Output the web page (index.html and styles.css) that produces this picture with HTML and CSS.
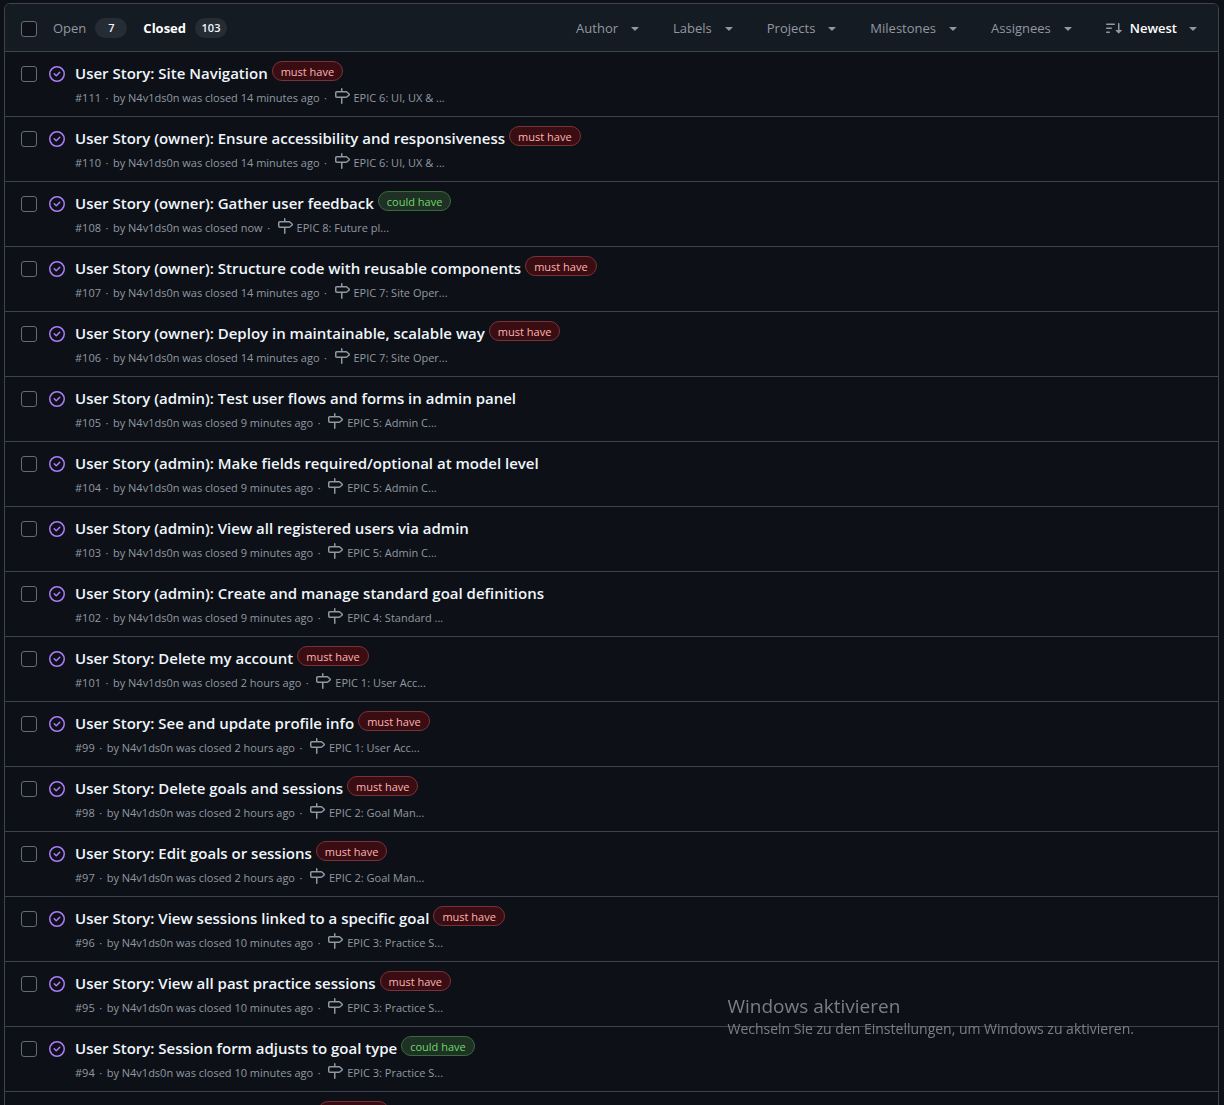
FILE: index.html
```
<!DOCTYPE html>
<html lang="en">
<head>
<meta charset="utf-8">
<title>Issues</title>
<link rel="stylesheet" href="styles.css">
</head>
<body>
<svg class="sprite" aria-hidden="true">
  <symbol id="closed" viewBox="0 0 16 16"><path d="M11.28 6.78a.75.75 0 0 0-1.06-1.06L7.25 8.69 5.78 7.22a.75.75 0 0 0-1.06 1.06l2 2a.75.75 0 0 0 1.06 0l3.5-3.5Z"/><path d="M16 8A8 8 0 1 1 0 8a8 8 0 0 1 16 0Zm-1.5 0a6.5 6.5 0 1 0-13 0 6.5 6.5 0 0 0 13 0Z"/></symbol>
  <symbol id="milestone" viewBox="0 0 16 16"><path d="M7.75 0a.75.75 0 0 1 .75.75V3h3.634c.414 0 .814.147 1.13.414l2.07 1.75a1.75 1.75 0 0 1 0 2.672l-2.07 1.75a1.75 1.75 0 0 1-1.13.414H8.5v5.25a.75.75 0 0 1-1.5 0V10H2.75A1.75 1.75 0 0 1 1 8.25v-3.5C1 3.784 1.784 3 2.75 3H7V.75A.75.75 0 0 1 7.75 0Zm4.384 8.5a.25.25 0 0 0 .161-.06l2.07-1.75a.248.248 0 0 0 0-.38l-2.07-1.75a.25.25 0 0 0-.161-.06H2.75a.25.25 0 0 0-.25.25v3.5c0 .138.112.25.25.25h9.384Z"/></symbol>
  <symbol id="sort" viewBox="0 0 16 16"><path d="M0 4.25a.75.75 0 0 1 .75-.75h7.5a.75.75 0 0 1 0 1.5H.75A.75.75 0 0 1 0 4.25Zm0 4a.75.75 0 0 1 .75-.75h4.5a.75.75 0 0 1 0 1.5H.75A.75.75 0 0 1 0 8.25Zm0 4a.75.75 0 0 1 .75-.75h2.5a.75.75 0 0 1 0 1.5H.75a.75.75 0 0 1-.75-.75ZM13.5 10h2.25a.25.25 0 0 1 .177.427l-3 3a.25.25 0 0 1-.354 0l-3-3A.25.25 0 0 1 9.75 10H12V3.75a.75.75 0 0 1 1.5 0V10Z"/></symbol>
  <symbol id="caret" viewBox="0 0 16 16"><path d="m4.427 7.427 3.396 3.396a.25.25 0 0 0 .354 0l3.396-3.396A.25.25 0 0 0 11.396 7H4.604a.25.25 0 0 0-.177.427Z"/></symbol>
</svg>

<main class="panel">
  <header class="toolbar">
    <input class="check" type="checkbox" aria-label="Select all issues">
    <nav class="states">
      <a class="state" href="#open">Open <span class="count">7</span></a>
      <a class="state current" href="#closed-issues">Closed <span class="count">103</span></a>
    </nav>
    <div class="filters">
      <button class="filter">Author <svg class="icon"><use href="#caret"/></svg></button>
      <button class="filter">Labels <svg class="icon"><use href="#caret"/></svg></button>
      <button class="filter">Projects <svg class="icon"><use href="#caret"/></svg></button>
      <button class="filter">Milestones <svg class="icon"><use href="#caret"/></svg></button>
      <button class="filter">Assignees <svg class="icon"><use href="#caret"/></svg></button>
      <button class="filter sort"><svg class="icon"><use href="#sort"/></svg><span>Newest</span><svg class="icon"><use href="#caret"/></svg></button>
    </div>
  </header>

  <ul class="issues">
    <li class="issue">
      <input class="check" type="checkbox" aria-labelledby="i111">
      <svg class="icon done"><use href="#closed"/></svg>
      <div class="body">
        <div class="heading"><a class="title" id="i111" href="#111">User Story: Site Navigation</a><a class="label must" href="#must">must have</a></div>
        <div class="meta"><span>#111</span><i>·</i><span>by N4v1ds0n was closed 14 minutes ago</span><i>·</i><a class="epic" href="#epic6"><svg class="icon"><use href="#milestone"/></svg>EPIC 6: UI, UX &amp; ...</a></div>
      </div>
    </li>
    <li class="issue">
      <input class="check" type="checkbox" aria-labelledby="i110">
      <svg class="icon done"><use href="#closed"/></svg>
      <div class="body">
        <div class="heading"><a class="title" id="i110" href="#110">User Story (owner): Ensure accessibility and responsiveness</a><a class="label must" href="#must">must have</a></div>
        <div class="meta"><span>#110</span><i>·</i><span>by N4v1ds0n was closed 14 minutes ago</span><i>·</i><a class="epic" href="#epic6"><svg class="icon"><use href="#milestone"/></svg>EPIC 6: UI, UX &amp; ...</a></div>
      </div>
    </li>
    <li class="issue">
      <input class="check" type="checkbox" aria-labelledby="i108">
      <svg class="icon done"><use href="#closed"/></svg>
      <div class="body">
        <div class="heading"><a class="title" id="i108" href="#108">User Story (owner): Gather user feedback</a><a class="label could" href="#could">could have</a></div>
        <div class="meta"><span>#108</span><i>·</i><span>by N4v1ds0n was closed now</span><i>·</i><a class="epic" href="#epic8"><svg class="icon"><use href="#milestone"/></svg>EPIC 8: Future pl...</a></div>
      </div>
    </li>
    <li class="issue">
      <input class="check" type="checkbox" aria-labelledby="i107">
      <svg class="icon done"><use href="#closed"/></svg>
      <div class="body">
        <div class="heading"><a class="title" id="i107" href="#107">User Story (owner): Structure code with reusable components</a><a class="label must" href="#must">must have</a></div>
        <div class="meta"><span>#107</span><i>·</i><span>by N4v1ds0n was closed 14 minutes ago</span><i>·</i><a class="epic" href="#epic7"><svg class="icon"><use href="#milestone"/></svg>EPIC 7: Site Oper...</a></div>
      </div>
    </li>
    <li class="issue">
      <input class="check" type="checkbox" aria-labelledby="i106">
      <svg class="icon done"><use href="#closed"/></svg>
      <div class="body">
        <div class="heading"><a class="title" id="i106" href="#106">User Story (owner): Deploy in maintainable, scalable way</a><a class="label must" href="#must">must have</a></div>
        <div class="meta"><span>#106</span><i>·</i><span>by N4v1ds0n was closed 14 minutes ago</span><i>·</i><a class="epic" href="#epic7"><svg class="icon"><use href="#milestone"/></svg>EPIC 7: Site Oper...</a></div>
      </div>
    </li>
    <li class="issue">
      <input class="check" type="checkbox" aria-labelledby="i105">
      <svg class="icon done"><use href="#closed"/></svg>
      <div class="body">
        <div class="heading"><a class="title" id="i105" href="#105">User Story (admin): Test user flows and forms in admin panel</a></div>
        <div class="meta"><span>#105</span><i>·</i><span>by N4v1ds0n was closed 9 minutes ago</span><i>·</i><a class="epic" href="#epic5"><svg class="icon"><use href="#milestone"/></svg>EPIC 5: Admin C...</a></div>
      </div>
    </li>
    <li class="issue">
      <input class="check" type="checkbox" aria-labelledby="i104">
      <svg class="icon done"><use href="#closed"/></svg>
      <div class="body">
        <div class="heading"><a class="title" id="i104" href="#104">User Story (admin): Make fields required/optional at model level</a></div>
        <div class="meta"><span>#104</span><i>·</i><span>by N4v1ds0n was closed 9 minutes ago</span><i>·</i><a class="epic" href="#epic5"><svg class="icon"><use href="#milestone"/></svg>EPIC 5: Admin C...</a></div>
      </div>
    </li>
    <li class="issue">
      <input class="check" type="checkbox" aria-labelledby="i103">
      <svg class="icon done"><use href="#closed"/></svg>
      <div class="body">
        <div class="heading"><a class="title" id="i103" href="#103">User Story (admin): View all registered users via admin</a></div>
        <div class="meta"><span>#103</span><i>·</i><span>by N4v1ds0n was closed 9 minutes ago</span><i>·</i><a class="epic" href="#epic5"><svg class="icon"><use href="#milestone"/></svg>EPIC 5: Admin C...</a></div>
      </div>
    </li>
    <li class="issue">
      <input class="check" type="checkbox" aria-labelledby="i102">
      <svg class="icon done"><use href="#closed"/></svg>
      <div class="body">
        <div class="heading"><a class="title" id="i102" href="#102">User Story (admin): Create and manage standard goal definitions</a></div>
        <div class="meta"><span>#102</span><i>·</i><span>by N4v1ds0n was closed 9 minutes ago</span><i>·</i><a class="epic" href="#epic4"><svg class="icon"><use href="#milestone"/></svg>EPIC 4: Standard ...</a></div>
      </div>
    </li>
    <li class="issue">
      <input class="check" type="checkbox" aria-labelledby="i101">
      <svg class="icon done"><use href="#closed"/></svg>
      <div class="body">
        <div class="heading"><a class="title" id="i101" href="#101">User Story: Delete my account</a><a class="label must" href="#must">must have</a></div>
        <div class="meta"><span>#101</span><i>·</i><span>by N4v1ds0n was closed 2 hours ago</span><i>·</i><a class="epic" href="#epic1"><svg class="icon"><use href="#milestone"/></svg>EPIC 1: User Acc...</a></div>
      </div>
    </li>
    <li class="issue">
      <input class="check" type="checkbox" aria-labelledby="i99">
      <svg class="icon done"><use href="#closed"/></svg>
      <div class="body">
        <div class="heading"><a class="title" id="i99" href="#99">User Story: See and update profile info</a><a class="label must" href="#must">must have</a></div>
        <div class="meta"><span>#99</span><i>·</i><span>by N4v1ds0n was closed 2 hours ago</span><i>·</i><a class="epic" href="#epic1"><svg class="icon"><use href="#milestone"/></svg>EPIC 1: User Acc...</a></div>
      </div>
    </li>
    <li class="issue">
      <input class="check" type="checkbox" aria-labelledby="i98">
      <svg class="icon done"><use href="#closed"/></svg>
      <div class="body">
        <div class="heading"><a class="title" id="i98" href="#98">User Story: Delete goals and sessions</a><a class="label must" href="#must">must have</a></div>
        <div class="meta"><span>#98</span><i>·</i><span>by N4v1ds0n was closed 2 hours ago</span><i>·</i><a class="epic" href="#epic2"><svg class="icon"><use href="#milestone"/></svg>EPIC 2: Goal Man...</a></div>
      </div>
    </li>
    <li class="issue">
      <input class="check" type="checkbox" aria-labelledby="i97">
      <svg class="icon done"><use href="#closed"/></svg>
      <div class="body">
        <div class="heading"><a class="title" id="i97" href="#97">User Story: Edit goals or sessions</a><a class="label must" href="#must">must have</a></div>
        <div class="meta"><span>#97</span><i>·</i><span>by N4v1ds0n was closed 2 hours ago</span><i>·</i><a class="epic" href="#epic2"><svg class="icon"><use href="#milestone"/></svg>EPIC 2: Goal Man...</a></div>
      </div>
    </li>
    <li class="issue">
      <input class="check" type="checkbox" aria-labelledby="i96">
      <svg class="icon done"><use href="#closed"/></svg>
      <div class="body">
        <div class="heading"><a class="title" id="i96" href="#96">User Story: View sessions linked to a specific goal</a><a class="label must" href="#must">must have</a></div>
        <div class="meta"><span>#96</span><i>·</i><span>by N4v1ds0n was closed 10 minutes ago</span><i>·</i><a class="epic" href="#epic3"><svg class="icon"><use href="#milestone"/></svg>EPIC 3: Practice S...</a></div>
      </div>
    </li>
    <li class="issue">
      <input class="check" type="checkbox" aria-labelledby="i95">
      <svg class="icon done"><use href="#closed"/></svg>
      <div class="body">
        <div class="heading"><a class="title" id="i95" href="#95">User Story: View all past practice sessions</a><a class="label must" href="#must">must have</a></div>
        <div class="meta"><span>#95</span><i>·</i><span>by N4v1ds0n was closed 10 minutes ago</span><i>·</i><a class="epic" href="#epic3"><svg class="icon"><use href="#milestone"/></svg>EPIC 3: Practice S...</a></div>
      </div>
    </li>
    <li class="issue">
      <input class="check" type="checkbox" aria-labelledby="i94">
      <svg class="icon done"><use href="#closed"/></svg>
      <div class="body">
        <div class="heading"><a class="title" id="i94" href="#94">User Story: Session form adjusts to goal type</a><a class="label could" href="#could">could have</a></div>
        <div class="meta"><span>#94</span><i>·</i><span>by N4v1ds0n was closed 10 minutes ago</span><i>·</i><a class="epic" href="#epic3"><svg class="icon"><use href="#milestone"/></svg>EPIC 3: Practice S...</a></div>
      </div>
    </li>
    <li class="issue">
      <input class="check" type="checkbox" aria-labelledby="i93">
      <svg class="icon done"><use href="#closed"/></svg>
      <div class="body">
        <div class="heading"><a class="title" id="i93" href="#93">User Story: Add practice sessions</a><a class="label must" href="#must">must have</a></div>
      </div>
    </li>
  </ul>
</main>

<aside class="activation">
  <p class="activation-title">Windows aktivieren</p>
  <p class="activation-text">Wechseln Sie zu den Einstellungen, um Windows zu aktivieren.</p>
</aside>
</body>
</html>
```
FILE: styles.css
```
* { box-sizing: border-box; }

body {
  margin: 0;
  height: 100vh;
  overflow: hidden;
  padding: 3px 5px 0 4px;
  background: #0d1117;
  color: #9198a1;
  font-family: "Open Sans", "Noto Sans", sans-serif;
  font-size: 13px;
}

a { color: inherit; text-decoration: none; }

.sprite { display: none; }

.icon {
  width: 16px;
  height: 16px;
  flex: none;
  fill: currentColor;
}

.panel {
  border: 1px solid #3d444d;
  border-radius: 6px;
  overflow: hidden;
}

.check {
  appearance: none;
  flex: none;
  width: 16px;
  height: 16px;
  margin: 0;
  border: 1px solid #656c76;
  border-radius: 3px;
  background: #0d1117;
}

.toolbar {
  display: flex;
  align-items: center;
  gap: 16px;
  height: 47px;
  padding: 2px 17px 0 16px;
  background: #151b23;
}

.states { display: flex; gap: 16px; padding-bottom: 2px; }

.state {
  display: flex;
  align-items: center;
  gap: 9px;
}

.current { color: #fff; font-weight: 700; }

.count {
  min-width: 32px;
  padding: 0 6px;
  border-radius: 10px;
  background: #262c34;
  color: #f0f6fc;
  font-size: 11px;
  font-weight: 600;
  line-height: 20px;
  text-align: center;
}

.filters {
  display: flex;
  gap: 30px;
  margin-left: auto;
  padding-bottom: 2px;
}

.filter {
  display: flex;
  align-items: center;
  gap: 9px;
  padding: 0;
  border: 0;
  background: none;
  color: #9198a1;
  font: inherit;
}

.sort { gap: 8px; }

.sort span { color: #fff; font-weight: 600; }

.issues { margin: 0; padding: 0; list-style: none; }

.issue {
  display: flex;
  align-items: flex-start;
  gap: 12px;
  padding: 0 16px 7px;
  border-top: 1px solid #3d444d;
}

.issue > .check,
.issue > .icon { margin-top: 14px; }

.done { color: #ab7df8; }

.body { flex: 1; min-width: 0; padding-top: 9px; margin-left: -2px; }

.heading {
  display: flex;
  align-items: flex-start;
  gap: 4px;
  margin-bottom: 1px;
}

.title {
  color: #f0f6fc;
  font-size: 15px;
  font-weight: 600;
  line-height: 24px;
}

.label {
  padding: 1px 8px 0;
  border: 1px solid;
  border-radius: 10px;
  font-size: 11px;
  line-height: 17px;
}

.must { color: #ffb3b3; background: #3a0d12; border-color: #7a3238; }
.could { color: #6bd968; background: #1f3024; border-color: #386b3a; }

.meta {
  display: flex;
  align-items: center;
  height: 23px;
  font-size: 11px;
}

.meta i { width: 12px; text-align: center; font-style: normal; }

.epic { display: flex; align-items: center; gap: 4px; margin-left: 2px; }

.epic .icon { margin-bottom: 4px; }

.activation {
  position: fixed;
  right: 90px;
  bottom: 66px;
  color: #7c7e81;
}

.activation p { margin: 0; }

.activation-title { font-size: 19px; line-height: 26px; }

.activation-text { font-size: 14px; line-height: 20px; }
```
